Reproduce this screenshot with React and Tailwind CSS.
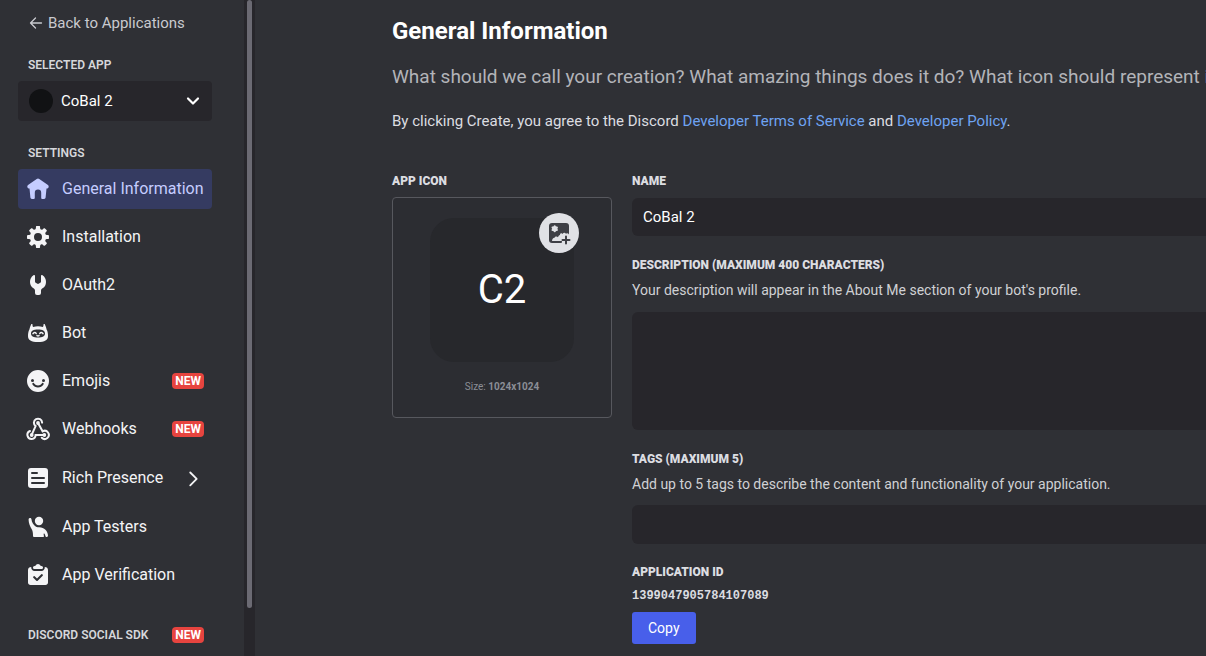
import React from "react";

function Icon({ children, className = "size-6" }) {
  return (
    <svg viewBox="0 0 24 24" fill="currentColor" aria-hidden="true" className={`${className} shrink-0`}>
      {children}
    </svg>
  );
}

function HomeIcon() {
  return (
    <Icon>
      <path d="M10.700 1.900a2.200 2.200 0 0 1 2.600 0l8.300 5.900c1 .7 1.300 1.500 1 2.400-.3.900-1 1.300-2.100 1.300L19.600 20.600c-.1.900-.7 1.400-1.500 1.400h-1.600c-.8 0-1.300-.5-1.300-1.300V15.700a3.200 3.200 0 0 0-6.400 0v5c0 .8-.5 1.300-1.300 1.300H5.900c-.8 0-1.400-.5-1.500-1.400L3.500 11.500c-1.100 0-1.800-.4-2.100-1.300-.3-.9 0-1.700 1-2.400z" />
    </Icon>
  );
}

function GearIcon() {
  return (
    <Icon>
      <path
        fillRule="evenodd"
        d="M10.56 1.1c-.46.05-.7.53-.64.98.18 1.16-.19 2.2-.98 2.53-.8.33-1.79-.15-2.49-1.1-.27-.36-.78-.52-1.14-.24-.77.59-1.45 1.27-2.04 2.04-.28.36-.12.87.24 1.14.96.7 1.43 1.7 1.1 2.49-.33.8-1.37 1.16-2.53.98-.45-.07-.93.18-.99.64a11.1 11.1 0 0 0 0 2.88c.06.46.54.7.99.64 1.16-.18 2.2.19 2.53.98.33.8-.14 1.79-1.1 2.49-.36.27-.52.78-.24 1.14.59.77 1.27 1.45 2.04 2.04.36.28.87.12 1.14-.24.7-.95 1.7-1.43 2.49-1.1.8.33 1.16 1.37.98 2.53-.07.45.18.93.64.99a11.1 11.1 0 0 0 2.88 0c.46-.06.7-.54.64-.99-.18-1.16.19-2.2.98-2.53.8-.33 1.79.14 2.49 1.1.27.36.78.52 1.14.24.77-.59 1.45-1.27 2.04-2.04.28-.36.12-.87-.24-1.14-.96-.7-1.43-1.7-1.1-2.49.33-.8 1.37-1.16 2.53-.98.45.07.93-.18.99-.64a11.1 11.1 0 0 0 0-2.88c-.06-.46-.54-.7-.99-.64-1.16.18-2.2-.19-2.53-.98-.33-.8.14-1.79 1.1-2.49.36-.27.52-.78.24-1.14a11.07 11.07 0 0 0-2.04-2.04c-.36-.28-.87-.12-1.14.24-.7.96-1.7 1.43-2.49 1.1-.8-.33-1.16-1.37-.98-2.53.07-.45-.18-.93-.64-.99a11.1 11.1 0 0 0-2.88 0ZM16 12a4 4 0 1 1-8 0 4 4 0 0 1 8 0Z"
      />
    </Icon>
  );
}

function WrenchIcon() {
  return (
    <Icon>
      <path d="M9 3.100c0-.8-.8-1.300-1.500-.9A8 8 0 0 0 4 8.900c0 2.700 1.400 5 3.500 6.400.9.600 1.500 1.400 1.500 2.500V20a2 2 0 0 0 2 2h2a2 2 0 0 0 2-2v-2.200c0-1.100.6-1.900 1.500-2.500A7.700 7.700 0 0 0 20 8.900a8 8 0 0 0-3.500-6.700c-.7-.4-1.500.1-1.500.9V8.500c0 .6-.2 1-.7 1.300l-1.300.8c-.6.4-1.400.4-2 0l-1.300-.8c-.5-.3-.7-.7-.7-1.300z" />
    </Icon>
  );
}

function BotIcon() {
  return (
    <Icon>
      <path
        fillRule="evenodd"
        d="M5.200 3.200c.2-.5 1.400-.4 1.400.2-.2 1.300 0 2 .6 2.600a15 15 0 0 1 9.600 0c.6-.6.8-1.300.6-2.600 0-.6 1.200-.7 1.400-.2.900 1.900 1.500 3.700 1.900 5.500C21.700 10.400 22 12.600 22 15c0 4-3.300 6-10 6S2 19 2 15c0-2.400.3-4.600 1.300-6.300.4-1.800 1-3.600 1.900-5.500ZM12 8.600c-4.600 0-7 1.200-7 3.900 0 2.600 2.400 4.100 7 4.100s7-1.500 7-4.100c0-2.700-2.400-3.900-7-3.900Z"
      />
      <path
        fill="none"
        stroke="currentColor"
        strokeWidth="1.500"
        strokeLinecap="round"
        d="M7 12.700c.8-1.500 2.500-1.500 3.200-.2M13.800 12.500c.7-1.300 2.400-1.300 3.200.2M11 14.600c.7.400 1.300.4 2 0"
      />
    </Icon>
  );
}

function SmileIcon() {
  return (
    <Icon>
      <path
        fillRule="evenodd"
        d="M12 23a11 11 0 1 0 0-22 11 11 0 0 0 0 22ZM6.500 13a1.500 1.500 0 1 0 0-3 1.500 1.500 0 0 0 0 3Zm11 0a1.500 1.500 0 1 0 0-3 1.500 1.500 0 0 0 0 3Zm-9.330 1.450a1 1 0 1 0-1.660 1.100 6.600 6.600 0 0 0 10.980 0 1 1 0 1 0-1.660-1.100 4.600 4.600 0 0 1-7.660 0Z"
      />
    </Icon>
  );
}

function WebhookIcon() {
  return (
    <Icon>
      <g fill="none" stroke="currentColor" strokeWidth="2" strokeLinecap="round">
        <path d="M16.100 5.600a4.100 4.100 0 1 0-6.500 3.500L6 17.200" />
        <path d="M4 14a4.100 4.100 0 1 0 5.600 4H18" />
        <path d="M12 6l4.600 8.300a4.100 4.100 0 1 1-.8 6.500" />
      </g>
      <circle cx="12" cy="6" r="1.900" />
      <circle cx="5.700" cy="18" r="1.900" />
      <circle cx="18.300" cy="18" r="1.900" />
    </Icon>
  );
}

function ArticleIcon() {
  return (
    <Icon>
      <path
        fillRule="evenodd"
        d="M5 2a3 3 0 0 0-3 3v14a3 3 0 0 0 3 3h14a3 3 0 0 0 3-3V5a3 3 0 0 0-3-3H5Zm1 4a1 1 0 0 0 0 2h5a1 1 0 1 0 0-2H6Zm-1 6a1 1 0 0 1 1-1h12a1 1 0 1 1 0 2H6a1 1 0 0 1-1-1Zm1 4a1 1 0 1 0 0 2h12a1 1 0 1 0 0-2H6Z"
      />
    </Icon>
  );
}

function TesterIcon() {
  return (
    <Icon>
      <circle cx="13" cy="6" r="4.200" />
      <path d="M3.800 3c.8-.2 1.500.300 1.600 1.100.4 3.300 2 6.400 4.600 7.600 1 .4 2 .500 3.200.500 5 0 8.800 3.600 8.800 8.600 0 .7-.5 1.200-1.200 1.200h-.5c-.5 0-.7-.3-.8-.8-.2-.9-.6-1.800-1.200-2.600-.3-.4-.8-.1-.7.400l.3 2c.1.600-.2 1-.8 1H8.300c-.8 0-1.300-.5-1.300-1.300 0-2.400-.2-4.200-1-6C4 11.500 2.600 8.400 2.600 4.800c0-1 .4-1.600 1.200-1.800Z" />
    </Icon>
  );
}

function ClipboardIcon() {
  return (
    <Icon>
      <path d="M9.500 2.800C10 1.700 10.900 1 12 1s2 .7 2.500 1.800l1.700.4c.6.200.8.600.8 1.200 0 .9-.7 1.600-1.600 1.600H8.600C7.700 6 7 5.300 7 4.400c0-.6.2-1 .8-1.200z" />
      <path
        fillRule="evenodd"
        d="M5.200 4C3.400 4 2 5.200 2 7v12.500c0 1.400 1.100 2.500 2.500 2.500h15c1.400 0 2.500-1.100 2.500-2.500V7c0-1.800-1.400-3-3.200-3 .2 2.300-1.300 4-3.300 4h-7C6.500 8 5 6.300 5.200 4Zm11.500 8.700a1 1 0 0 0-1.400-1.400L11 15.600l-2.300-2.300a1 1 0 0 0-1.400 1.400l3 3a1 1 0 0 0 1.400 0l5-5Z"
      />
    </Icon>
  );
}

function ImagePlusIcon() {
  return (
    <Icon>
      <rect x="2" y="2" width="20" height="20" rx="3" />
      <g fill="#e0e1e5">
        <circle cx="7.700" cy="7.800" r="2.700" />
        <circle cx="7.700" cy="5.300" r="1" />
        <circle cx="7.700" cy="10.300" r="1" />
        <circle cx="5.500" cy="6.500" r="1" />
        <circle cx="9.900" cy="6.500" r="1" />
        <circle cx="5.500" cy="9.100" r="1" />
        <circle cx="9.900" cy="9.100" r="1" />
        <path d="M5 20c.1-1.900 1-3.100 2.500-3.200.5-1.500 2.600-1.800 3.500-.5.300-1.300 1-2 2-2.300-.3-1.500 1.700-2.300 2.600-1.100.8-1.400 2.600-1.400 3.300-.1.900-.9 2.400-.6 3.100.6V23h-7.500l.5-3z" />
      </g>
      <path d="M19 14.500a1 1 0 0 1 1 1V18h2.500a1 1 0 1 1 0 2H20v2.500a1 1 0 1 1-2 0V20h-2.500a1 1 0 1 1 0-2H18v-2.500a1 1 0 0 1 1-1Z" />
    </Icon>
  );
}

function NewBadge() {
  return (
    <span className="rounded-[4px] bg-[#e7443f] px-[3px] text-xs leading-4 font-bold text-white">NEW</span>
  );
}

function SectionLabel({ children }) {
  return <h2 className="text-xs leading-4 font-semibold text-[#d6d7db]">{children}</h2>;
}

const NAV = [
  { label: "General Information", icon: HomeIcon, active: true },
  { label: "Installation", icon: GearIcon },
  { label: "OAuth2", icon: WrenchIcon },
  { label: "Bot", icon: BotIcon },
  { label: "Emojis", icon: SmileIcon, badge: true },
  { label: "Webhooks", icon: WebhookIcon, badge: true },
  { label: "Rich Presence", icon: ArticleIcon, nested: true },
  { label: "App Testers", icon: TesterIcon },
  { label: "App Verification", icon: ClipboardIcon },
];

function NavItem({ item }) {
  const Glyph = item.icon;
  const tone = item.active ? "bg-[#353b61] text-[#c5cdff]" : "text-[#f4f4f6]";
  const height = item.nested ? "h-[42px]" : "h-10";
  return (
    <li>
      <a
        href="#"
        aria-current={item.active ? "page" : undefined}
        className={`flex items-center rounded-[4px] px-2 ${height} ${tone}`}
      >
        <Glyph />
        <span className="ml-3 flex-1 text-base leading-5 whitespace-nowrap">{item.label}</span>
        {item.badge && <NewBadge />}
        {item.nested && (
          <svg viewBox="0 0 24 24" aria-hidden="true" className="size-[22px]" fill="none" stroke="currentColor" strokeWidth="2" strokeLinecap="round" strokeLinejoin="round">
            <path d="M9 6l7 7-7 7" />
          </svg>
        )}
      </a>
    </li>
  );
}

function Sidebar() {
  return (
    <aside className="flex shrink-0">
      <div className="w-61 pt-3 pr-8 pl-[18px]">
        <a href="#" className="ml-2.5 flex h-[22px] items-center gap-1 text-[15px] leading-5 text-[#c9cacf]">
          <svg viewBox="0 0 16 16" aria-hidden="true" className="size-4" fill="none" stroke="currentColor" strokeWidth="1.300" strokeLinecap="round" strokeLinejoin="round">
            <path d="M13.500 8H2.500M7.500 3l-5 5 5 5" />
          </svg>
          Back to Applications
        </a>
        <div className="mt-[23px] ml-2.5">
          <SectionLabel>SELECTED APP</SectionLabel>
        </div>
        <button type="button" className="mt-2 flex h-10 w-full items-center rounded-[4px] bg-[#27262b] pr-2.5 pl-[11px] text-left text-white">
          <span className="size-6 rounded-full bg-[#111214]" />
          <span className="ml-2 flex-1 text-[15px] leading-5">CoBal 2</span>
          <svg viewBox="0 0 18 18" aria-hidden="true" className="size-[18px]" fill="none" stroke="currentColor" strokeWidth="2.200" strokeLinecap="round" strokeLinejoin="round">
            <path d="M4 6.500l5 5 5-5" />
          </svg>
        </button>
        <div className="mt-6 ml-2.5">
          <SectionLabel>SETTINGS</SectionLabel>
        </div>
        <nav aria-label="Settings" className="mt-2">
          <ul className="flex flex-col gap-2">
            {NAV.map((item) => (
              <NavItem key={item.label} item={item} />
            ))}
          </ul>
        </nav>
        <div className="mt-8 mr-2 ml-2.5 flex items-center justify-between whitespace-nowrap">
          <SectionLabel>DISCORD SOCIAL SDK</SectionLabel>
          <NewBadge />
        </div>
      </div>
      <div className="flex w-[11px] flex-col bg-[#27262b] px-[3px] pb-12">
        <div className="w-full flex-1 rounded-full bg-[#6b6a73]" />
      </div>
    </aside>
  );
}

const LABEL = "block text-xs leading-4 font-black text-[#dcdde1]";
const HINT = "text-sm leading-5 text-[#cfd0d4]";
const FIELD = "block w-full rounded-l-[6px] bg-[#27262b] px-[11px] text-[15px] text-white outline-none";

function AppIconPicker() {
  return (
    <section className="w-55 shrink-0">
      <h2 className={LABEL}>APP ICON</h2>
      <div className="mt-2 flex h-[221px] flex-col items-center rounded-[4px] border border-[#57585e] bg-[#2c2d32] pt-5">
        <div className="relative flex size-36 items-center justify-center rounded-3xl bg-[#27282c] text-[40px] leading-none text-white">
          C2
          <button
            type="button"
            aria-label="Upload image"
            className="absolute -top-[5px] -right-[5px] flex size-10 items-center justify-center rounded-full bg-[#e0e1e5] text-[#3e3f45]"
          >
            <ImagePlusIcon />
          </button>
        </div>
        <p className="mt-[17px] text-[10px] leading-4 text-[#8b8e96]">
          Size: <strong className="font-bold">1024x1024</strong>
        </p>
      </div>
    </section>
  );
}

function DetailsForm() {
  return (
    <form className="min-w-0 flex-1">
      <label htmlFor="app-name" className={LABEL}>NAME</label>
      <input id="app-name" type="text" defaultValue="CoBal 2" className={`${FIELD} mt-[9px] h-[38px]`} />

      <label htmlFor="app-description" className={`${LABEL} mt-[21px]`}>DESCRIPTION (MAXIMUM 400 CHARACTERS)</label>
      <p className={`${HINT} mt-[7px]`}>Your description will appear in the About Me section of your bot's profile.</p>
      <textarea id="app-description" className={`${FIELD} mt-3 h-[118px] resize-none py-2.5`} />

      <label htmlFor="app-tags" className={`${LABEL} mt-[21px]`}>TAGS (MAXIMUM 5)</label>
      <p className={`${HINT} mt-[7px]`}>Add up to 5 tags to describe the content and functionality of your application.</p>
      <input id="app-tags" type="text" className={`${FIELD} mt-[11px] h-[39px]`} />

      <h2 className={`${LABEL} mt-5`}>APPLICATION ID</h2>
      <p className="mt-2 font-['Liberation_Mono',monospace] text-xs leading-4 font-bold text-[#dcdde1]">1399047905784107089</p>
      <button type="button" className="mt-2 h-8 rounded-[3px] bg-[#485fea] px-4 text-sm leading-5 text-white">
        Copy
      </button>
    </form>
  );
}

export default function App() {
  return (
    <div className="flex min-h-screen bg-[#2f3035] font-['Roboto',sans-serif]">
      <Sidebar />
      <main className="min-w-0 flex-1 overflow-hidden pt-4 pb-3 pl-[137px]">
        <h1 className="text-2xl leading-[30px] font-bold text-white">General Information</h1>
        <p className="mt-[17px] text-[19px] leading-7 whitespace-nowrap text-[#b3b4b9]">
          What should we call your creation? What amazing things does it do? What icon should represent it?
        </p>
        <p className="mt-[18px] text-[15px] leading-6 text-[#dcdde1]">
          By clicking Create, you agree to the Discord{" "}
          <a href="#" className="text-[#6ea3f2]">Developer Terms of Service</a> and{" "}
          <a href="#" className="text-[#6ea3f2]">Developer Policy</a>.
        </p>
        <div className="mt-10 flex gap-5">
          <AppIconPicker />
          <DetailsForm />
        </div>
      </main>
    </div>
  );
}
